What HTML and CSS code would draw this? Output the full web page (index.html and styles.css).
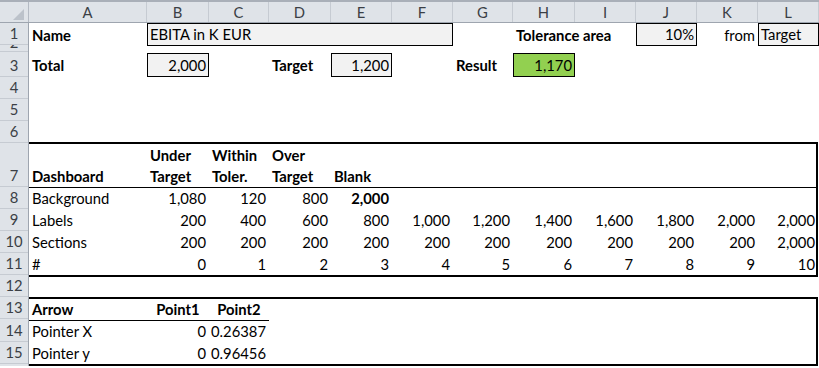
FILE: index.html
```html
<!DOCTYPE html>
<html>
<head>
<meta charset="utf-8">
<link rel="stylesheet" href="styles.css">
</head>
<body>
<div class="sheet">
  <div class="colheads">
    <div class="corner"><span class="tri"></span></div>
    <div class="ch">A</div><div class="ch">B</div><div class="ch">C</div><div class="ch">D</div>
    <div class="ch">E</div><div class="ch">F</div><div class="ch">G</div><div class="ch">H</div>
    <div class="ch">I</div><div class="ch">J</div><div class="ch">K</div><div class="ch">L</div>
  </div>
  <div class="main">
    <div class="rowheads">
      <div class="rh h22">1</div>
      <div class="rh h7">2</div>
      <div class="rh h25">3</div>
      <div class="rh h22">4</div>
      <div class="rh h22">5</div>
      <div class="rh h22">6</div>
      <div class="rh h44">7</div>
      <div class="rh h22">8</div>
      <div class="rh h22">9</div>
      <div class="rh h22">10</div>
      <div class="rh h22">11</div>
      <div class="rh h22">12</div>
      <div class="rh h22">13</div>
      <div class="rh h23">14</div>
      <div class="rh h22">15</div>
      <div class="rh rest"></div>
    </div>
    <div class="body">
      <div class="row h22">
        <div class="c b">Name</div>
        <div class="c box span5">EBITA in K EUR</div>
        <div class="c b at-h">Tolerance area</div>
        <div class="c r box at-j">10%</div>
        <div class="c r">from</div>
        <div class="c box">Target</div>
      </div>
      <div class="row h7"></div>
      <div class="row h25 pb1">
        <div class="c b">Total</div>
        <div class="c r box">2,000</div>
        <div class="c b at-d">Target</div>
        <div class="c r box">1,200</div>
        <div class="c b at-g">Result</div>
        <div class="c r box green">1,170</div>
      </div>
      <div class="row h22"></div>
      <div class="row h22"></div>
      <div class="row h21"></div>
      <div class="block">
        <div class="row h44 underline">
          <div class="c b">Dashboard</div>
          <div class="c b"><span>Under<br>Target</span></div>
          <div class="c b"><span>Within<br>Toler.</span></div>
          <div class="c b"><span>Over<br>Target</span></div>
          <div class="c b">Blank</div>
        </div>
        <div class="row h21">
          <div class="c">Background</div>
          <div class="c r">1,080</div>
          <div class="c r">120</div>
          <div class="c r">800</div>
          <div class="c r b">2,000</div>
        </div>
        <div class="row h22">
          <div class="c">Labels</div>
          <div class="c r">200</div><div class="c r">400</div><div class="c r">600</div><div class="c r">800</div>
          <div class="c r">1,000</div><div class="c r">1,200</div><div class="c r">1,400</div><div class="c r">1,600</div>
          <div class="c r">1,800</div><div class="c r">2,000</div><div class="c r last">2,000</div>
        </div>
        <div class="row h22">
          <div class="c">Sections</div>
          <div class="c r">200</div><div class="c r">200</div><div class="c r">200</div><div class="c r">200</div>
          <div class="c r">200</div><div class="c r">200</div><div class="c r">200</div><div class="c r">200</div>
          <div class="c r">200</div><div class="c r">200</div><div class="c r last">2,000</div>
        </div>
        <div class="row h22">
          <div class="c">#</div>
          <div class="c r">0</div><div class="c r">1</div><div class="c r">2</div><div class="c r">3</div>
          <div class="c r">4</div><div class="c r">5</div><div class="c r">6</div><div class="c r">7</div>
          <div class="c r">8</div><div class="c r">9</div><div class="c r last">10</div>
        </div>
      </div>
      <div class="row h20"></div>
      <div class="block">
        <div class="row h22">
          <div class="c b ul">Arrow</div>
          <div class="c b ctr ul">Point1</div>
          <div class="c b ctr ul">Point2</div>
        </div>
        <div class="row h21">
          <div class="c">Pointer X</div>
          <div class="c r">0</div>
          <div class="c r">0.26387</div>
        </div>
        <div class="row h22">
          <div class="c">Pointer y</div>
          <div class="c r">0</div>
          <div class="c r">0.96456</div>
        </div>
      </div>
    </div>
  </div>
</div>
</body>
</html>
```

FILE: styles.css
```css
* { box-sizing: border-box; }
html, body { margin: 0; padding: 0; background: #fff; }
body {
  width: 819px;
  height: 368px;
  overflow: hidden;
  font-family: "Lato", "Liberation Sans", sans-serif;
  font-size: 14.8px;
  color: #000;
}
.sheet { width: 819px; height: 368px; overflow: hidden; }

.colheads {
  display: grid;
  grid-template-columns: 29px 118px 62px 60px 62px 61px 61px 60px 62px 61px 61px 61px 61px;
  height: 23px;
  background: #dfe3e8;
  border-top: 2px solid #a9afb8;
  border-bottom: 1px solid #9ea5af;
}
.corner {
  display: flex;
  justify-content: flex-end;
  align-items: flex-end;
  padding: 0 4px 2px 0;
  border-right: 1px solid #b4bac3;
}
.tri {
  width: 0; height: 0;
  border-left: 11px solid transparent;
  border-bottom: 11px solid #bcc2ca;
}
.ch {
  text-align: center;
  line-height: 20px;
  color: #3b3f45;
  border-right: 1px solid #c6cbd2;
}

.main { display: flex; }
.rowheads {
  width: 29px;
  flex: none;
  background: #dfe3e8;
  border-right: 1px solid #9ea5af;
  display: flex;
  flex-direction: column;
}
.rh {
  display: flex;
  justify-content: center;
  align-items: flex-end;
  line-height: 21px;
  color: #3b3f45;
  border-bottom: 1px solid #c6cbd2;
  overflow: hidden;
  flex: none;
}
.rh.h7 { line-height: 17px; }
.rh.rest { flex: 1; border-bottom: 0; }

.body { width: 790px; flex: none; }
.row {
  display: grid;
  grid-template-columns: 118px 62px 60px 62px 61px 61px 60px 62px 61px 61px 61px 1fr;
}
.h7 { height: 7px; }
.h20 { height: 20px; }
.h21 { height: 21px; }
.h22 { height: 22px; }
.h23 { height: 23px; }
.h25 { height: 25px; }
.h44 { height: 44px; }

.block {
  width: 789px;
  border-top: 2px solid #000;
  border-right: 2px solid #000;
  border-bottom: 2px solid #000;
}
.underline { border-bottom: 1px solid #000; }

.c {
  display: flex;
  align-items: flex-end;
  padding: 0 3px;
  line-height: 21px;
  white-space: nowrap;
  min-width: 0;
}
.pb1 .c { padding-bottom: 1px; }
.r { justify-content: flex-end; }
.ctr { justify-content: center; }
.b { font-weight: 700; }
.last { padding-right: 1px; }
.ul { border-bottom: 1px solid #000; }

.box {
  background: #f2f2f2;
  border: 1px solid #000;
  padding-left: 2px;
  padding-right: 2px;
}
.pb1 .box { margin-top: 1px; padding-bottom: 0; }
.green { background: #92d050; }
.span5 { grid-column: span 5; }
.at-d { grid-column-start: 4; }
.at-g { grid-column-start: 7; }
.at-h { grid-column-start: 8; }
.at-j { grid-column-start: 10; }
```
